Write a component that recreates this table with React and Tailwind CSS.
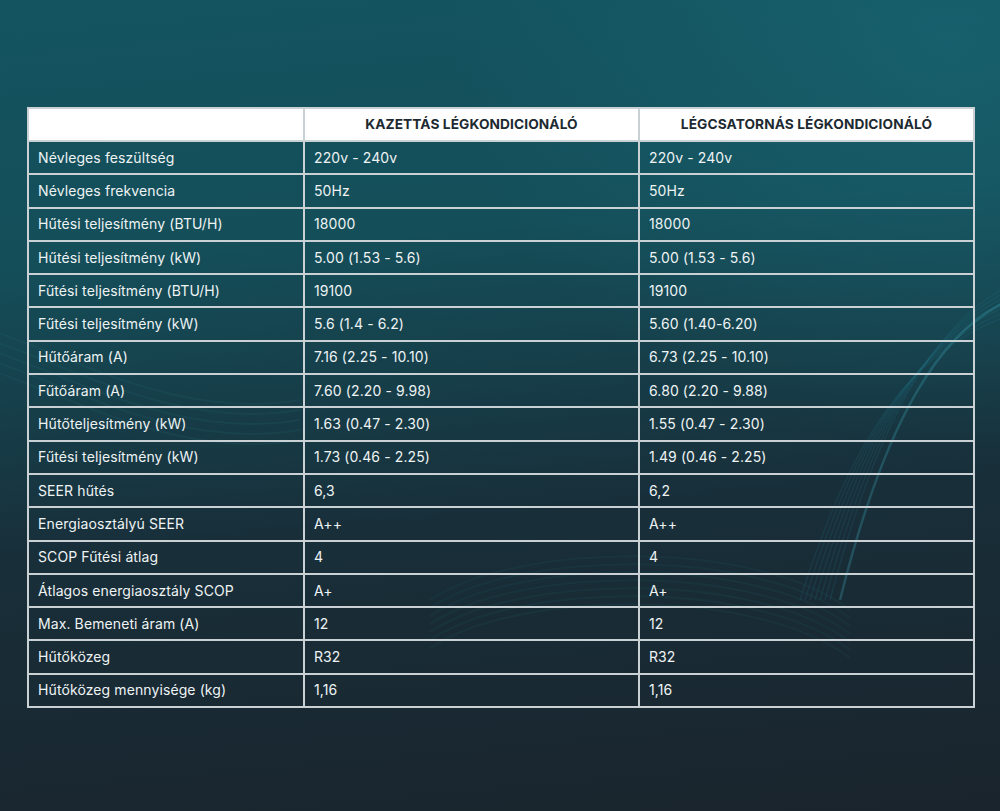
import React from 'react';

const rows = [
  ['Névleges feszültség', '220v - 240v', '220v - 240v'],
  ['Névleges frekvencia', '50Hz', '50Hz'],
  ['Hűtési teljesítmény (BTU/H)', '18000', '18000'],
  ['Hűtési teljesítmény (kW)', '5.00 (1.53 - 5.6)', '5.00 (1.53 - 5.6)'],
  ['Fűtési teljesítmény (BTU/H)', '19100', '19100'],
  ['Fűtési teljesítmény (kW)', '5.6 (1.4 - 6.2)', '5.60 (1.40-6.20)'],
  ['Hűtőáram (A)', '7.16 (2.25 - 10.10)', '6.73 (2.25 - 10.10)'],
  ['Fűtőáram (A)', '7.60 (2.20 - 9.98)', '6.80 (2.20 - 9.88)'],
  ['Hűtőteljesítmény (kW)', '1.63 (0.47 - 2.30)', '1.55 (0.47 - 2.30)'],
  ['Fűtési teljesítmény (kW)', '1.73 (0.46 - 2.25)', '1.49 (0.46 - 2.25)'],
  ['SEER hűtés', '6,3', '6,2'],
  ['Energiaosztályú SEER', 'A++', 'A++'],
  ['SCOP Fűtési átlag', '4', '4'],
  ['Átlagos energiaosztály SCOP', 'A+', 'A+'],
  ['Max. Bemeneti áram (A)', '12', '12'],
  ['Hűtőközeg', 'R32', 'R32'],
  ['Hűtőközeg mennyisége (kg)', '1,16', '1,16'],
];

// decorative wave lines in the background
const Waves = () => (
  <svg className="absolute inset-0 w-full h-full" viewBox="0 0 1000 811" preserveAspectRatio="none">
    <defs>
      <radialGradient id="glow" cx="0.95" cy="0.05" r="0.5">
        <stop offset="0" stopColor="#1a6b78" stopOpacity="0.55" />
        <stop offset="1" stopColor="#1a6b78" stopOpacity="0" />
      </radialGradient>
    </defs>
    <rect width="1000" height="811" fill="url(#glow)" />
    {[0, 5, 10, 15, 20, 25, 30].map(d => (
      <path key={'a' + d} d={`M 1010 ${285 + d} C ${940 - d} ${320 + d}, ${880 - d} ${410 + d}, ${830 - d} 600`} stroke="#2e8a99" strokeOpacity={0.14} strokeWidth="1.5" fill="none" />
    ))}
    <path d="M 1010 300 C 940 330, 885 420, 840 600" stroke="#3aa3b3" strokeOpacity="0.3" strokeWidth="2.5" fill="none" />
    {[0, 8, 16, 24, 32, 40, 48].map(d => (
      <path key={'b' + d} d={`M 430 ${600 + d} C 520 ${540 + d}, 760 ${540 + d}, 850 ${610 + d}`} stroke="#2a7684" strokeOpacity={0.1} strokeWidth="2" fill="none" />
    ))}
    {[0, 10, 20, 30, 40].map(d => (
      <path key={'c' + d} d={`M -10 ${330 + d} C 80 ${360 + d}, 180 ${420 + d}, 300 ${400 + d}`} stroke="#2d8592" strokeOpacity={0.1} strokeWidth="2" fill="none" />
    ))}
  </svg>
);

export default function App() {
  return (
    <div
      className="relative w-[1000px] h-[811px] overflow-hidden bg-[linear-gradient(175deg,#135460_0%,#144e59_30%,#182f3a_62%,#1a242c_100%)]"
      style={{ fontFamily: 'Inter, "Noto Sans", sans-serif' }}
    >
      <Waves />
      <div className="relative pt-[107px] pl-[27px]">
        <table className="w-[946px] border-collapse table-fixed text-[14px] tracking-[0.1px] text-[#eef3f4]">
          <colgroup>
            <col className="w-[276px]" />
            <col className="w-[335px]" />
            <col className="w-[335px]" />
          </colgroup>
          <thead>
            <tr className="bg-white h-[33px]">
              <th className="border-2 border-[#c9d1d5]" />
              <th className="border-2 border-[#c9d1d5] text-center text-[13.7px] font-bold text-[#1d2a31]">KAZETTÁS LÉGKONDICIONÁLÓ</th>
              <th className="border-2 border-[#c9d1d5] text-center text-[13.7px] font-bold text-[#1d2a31]">LÉGCSATORNÁS LÉGKONDICIONÁLÓ</th>
            </tr>
          </thead>
          <tbody>
            {rows.map(r => (
              <tr key={r[0]} className="h-[33.3px]">
                {r.map((c, i) => (
                  <td key={i} className="border-2 border-[#c9d1d5] pl-[9px] leading-none">{c}</td>
                ))}
              </tr>
            ))}
          </tbody>
        </table>
      </div>
    </div>
  );
}
